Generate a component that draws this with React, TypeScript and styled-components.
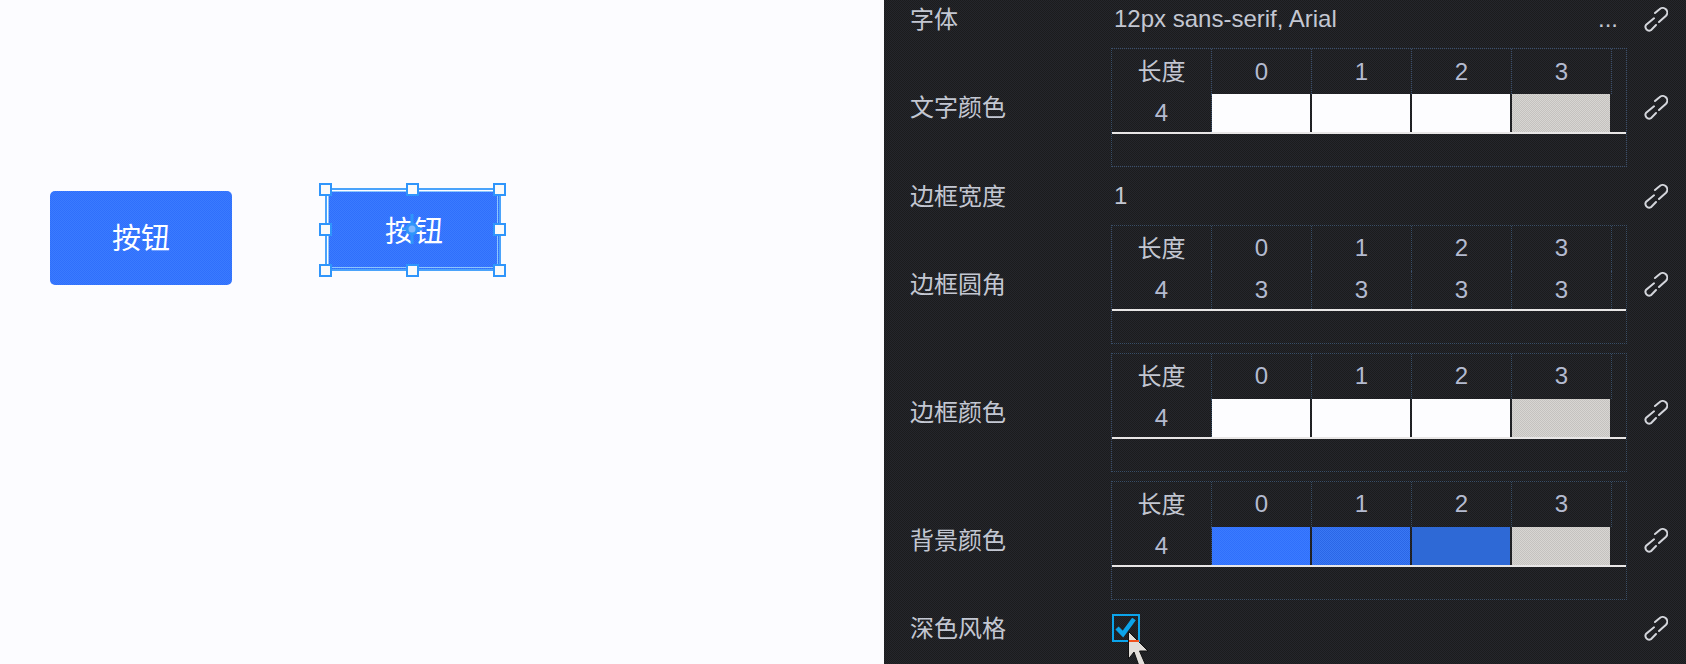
import React from 'react';
import styled, { createGlobalStyle } from 'styled-components';

const GlobalStyle = createGlobalStyle`
  html, body {
    margin: 0;
    padding: 0;
    background: #fcfcff;
    overflow: hidden;
  }
  body {
    font-family: 'Liberation Sans', 'Noto Sans CJK SC', sans-serif;
  }
`;

const Page = styled.div`
  display: flex;
  width: 1686px;
  height: 664px;
  overflow: hidden;
`;

const Canvas = styled.div`
  position: relative;
  flex: 0 0 884px;
  background: #fcfcff;
`;

const BLUE_DITHER = `repeating-conic-gradient(#2f6ffb 0 25%, #3b7bff 0 50%) 0 0 / 2px 2px`;

const CanvasButton = styled.div<{ $left: number; $top: number; $w: number; $h: number; $radius: number }>`
  position: absolute;
  left: ${(p) => p.$left}px;
  top: ${(p) => p.$top}px;
  width: ${(p) => p.$w}px;
  height: ${(p) => p.$h}px;
  padding-bottom: 4px;
  box-sizing: border-box;
  border-radius: ${(p) => p.$radius}px;
  background: ${BLUE_DITHER};
  color: #fff;
  font-size: 29px;
  display: flex;
  align-items: center;
  justify-content: center;
`;

const Selection = styled.div`
  position: absolute;
  left: 325px;
  top: 188px;
  width: 176px;
  height: 83px;
  box-sizing: border-box;
  border: 2px solid #4aa3fb;
  outline: 1px solid #8cc6fd;
  outline-offset: -4px;
`;

const Handle = styled.span<{ $x: number; $y: number }>`
  position: absolute;
  left: ${(p) => p.$x}px;
  top: ${(p) => p.$y}px;
  width: 13px;
  height: 13px;
  box-sizing: border-box;
  background: #fafafa;
  border: 2px solid #2f95fb;
`;

const MoveMark = styled.svg`
  position: absolute;
  left: 397px;
  top: 213px;
`;

const Panel = styled.div`
  flex: 1;
  box-sizing: border-box;
  padding: 0 0 0 26px;
  margin-top: -5px;
  height: 669px;
  background: repeating-conic-gradient(#1b1c1d 0 25%, #25262c 0 50%) 0 0 / 2px 2px;
  border-left: 1px dotted #2b3a4e;
  margin-left: -1px;
  color: #c3c7d2;
  font-size: 24px;
`;

const Row = styled.div<{ $h: number }>`
  display: flex;
  align-items: center;
  height: ${(p) => p.$h}px;
`;

const Label = styled.div`
  flex: 0 0 201px;
  padding-bottom: 4px;
`;

const Value = styled.div`
  flex: 0 0 516px;
  box-sizing: border-box;
  padding-left: 3px;
  display: flex;
  align-items: center;
  justify-content: space-between;
  font-size: 24px;
`;

const Ellipsis = styled.span`
  margin-right: 9px;
  font-size: 24px;
  line-height: 1;
`;

const LinkBox = styled.div`
  margin-left: 16px;
  width: 25px;
  height: 25px;
  color: #d4d6dc;
`;

const Table = styled.div`
  flex: 0 0 516px;
  box-sizing: border-box;
  height: 119px;
  border: 1px dotted #3a4f6a;
  display: grid;
  grid-template-columns: 100px 100px 100px 100px 100px 1fr;
  grid-template-rows: 45px 38px 2px 1fr;
  color: #b4bbd0;
  font-size: 24px;
`;

const Cell = styled.div<{ $sep?: boolean; $cjk?: boolean }>`
  display: flex;
  align-items: center;
  justify-content: center;
  border-right: ${(p) => (p.$sep ? '1px dotted #3a4f6a' : 'none')};
  padding-bottom: ${(p) => (p.$cjk ? '4px' : '0')};
  color: ${(p) => (p.$cjk ? '#c3c7d2' : 'inherit')};
`;

const Swatch = styled.div<{ $bg: string }>`
  background: ${(p) => p.$bg};
  margin-right: 2px;
`;

const Rule = styled.div`
  grid-column: 1 / 7;
  background: #e8e6e6;
`;

const CheckBox = styled.div`
  position: relative;
  width: 28px;
  height: 28px;
  margin-left: -2px;
  box-sizing: border-box;
  border: 2px solid #0ca4ea;
  display: flex;
  align-items: center;
  justify-content: center;
  color: #0ca4ea;
`;

const Pointer = styled.svg`
  position: absolute;
  left: 14px;
  top: 15px;
`;

const LinkIcon = () => (
  <svg width="25" height="25" viewBox="0 0 25 25" fill="none" stroke="currentColor" strokeWidth="2" strokeLinecap="round">
    <path d="M12 6 L16.5 2.2 A4.6 4.6 0 0 1 23 8.7 L16 15" />
    <path d="M11 11.3 L3.2 17.6 A3.8 3.8 0 0 0 8 23.2 L13 18" />
  </svg>
);

const HANDLE_X = [319, 406, 493];
const HANDLE_Y = [183, 223, 264];

const GREY_DITHER = 'repeating-conic-gradient(#c4c2bf 0 25%, #d8d6d3 0 50%) 0 0 / 2px 2px';
const WHITE_SWATCHES = ['#fdfdff', '#fdfdff', '#fdfdff', GREY_DITHER];
const BLUE_SWATCHES = [
  BLUE_DITHER,
  'repeating-conic-gradient(#2a66e6 0 25%, #3a78f4 0 50%) 0 0 / 2px 2px',
  '#2e69d6',
  GREY_DITHER,
];

const LengthTable: React.FC<{ swatches?: string[]; values?: string[] }> = ({ swatches, values }) => (
  <Table>
    <Cell $sep $cjk>长度</Cell>
    {['0', '1', '2', '3'].map((n) => (
      <Cell key={n} $sep>{n}</Cell>
    ))}
    <Cell />
    <Cell $sep>4</Cell>
    {swatches
      ? swatches.map((c, i) => <Swatch key={i} $bg={c} />)
      : values?.map((v, i) => <Cell key={i} $sep>{v}</Cell>)}
    <Cell />
    <Rule />
  </Table>
);

const LinkButton = () => (
  <LinkBox>
    <LinkIcon />
  </LinkBox>
);

export default function App() {
  return (
    <Page>
      <GlobalStyle />
      <Canvas>
        <CanvasButton $left={50} $top={191} $w={182} $h={94} $radius={5}>按钮</CanvasButton>
        <CanvasButton $left={328} $top={191} $w={172} $h={79} $radius={0}>按钮</CanvasButton>
        <Selection />
        {HANDLE_Y.map((y, r) =>
          HANDLE_X.map((x, c) =>
            r === 1 && c === 1 ? null : <Handle key={`${x}-${y}`} $x={x} $y={y} />
          )
        )}
        <MoveMark width="30" height="32" viewBox="0 0 30 32" fill="none" stroke="#2f95fb" strokeWidth="3">
          <path d="M15 1 V31 M5 16 H25" />
          <circle cx="15" cy="16" r="5" fill="#7fb6fc" />
        </MoveMark>
      </Canvas>
      <Panel>
        <Row $h={48}>
          <Label>字体</Label>
          <Value>
            <span>12px sans-serif, Arial</span>
            <Ellipsis>...</Ellipsis>
          </Value>
          <LinkButton />
        </Row>
        <Row $h={129}>
          <Label>文字颜色</Label>
          <LengthTable swatches={WHITE_SWATCHES} />
          <LinkButton />
        </Row>
        <Row $h={48}>
          <Label>边框宽度</Label>
          <Value>1</Value>
          <LinkButton />
        </Row>
        <Row $h={128}>
          <Label>边框圆角</Label>
          <LengthTable values={['3', '3', '3', '3']} />
          <LinkButton />
        </Row>
        <Row $h={128}>
          <Label>边框颜色</Label>
          <LengthTable swatches={WHITE_SWATCHES} />
          <LinkButton />
        </Row>
        <Row $h={128}>
          <Label>背景颜色</Label>
          <LengthTable swatches={BLUE_SWATCHES} />
          <LinkButton />
        </Row>
        <Row $h={48}>
          <Label>深色风格</Label>
          <Value>
            <CheckBox>
              <svg width="22" height="20" viewBox="0 0 22 20" fill="none" stroke="currentColor" strokeWidth="4.5">
                <path d="M2 10 L8 16 L19 1" />
              </svg>
              <Pointer width="24" height="36" viewBox="0 0 24 36">
                <path d="M0.5 0.5 L20 20 L11.5 20 L18 35 L11 35 L6 21 L0.5 28 Z" fill="#e2deda" stroke="#111" strokeWidth="1" />
                <path d="M1 10 H11" stroke="#f0521e" strokeWidth="2" />
              </Pointer>
            </CheckBox>
          </Value>
          <LinkButton />
        </Row>
      </Panel>
    </Page>
  );
}
